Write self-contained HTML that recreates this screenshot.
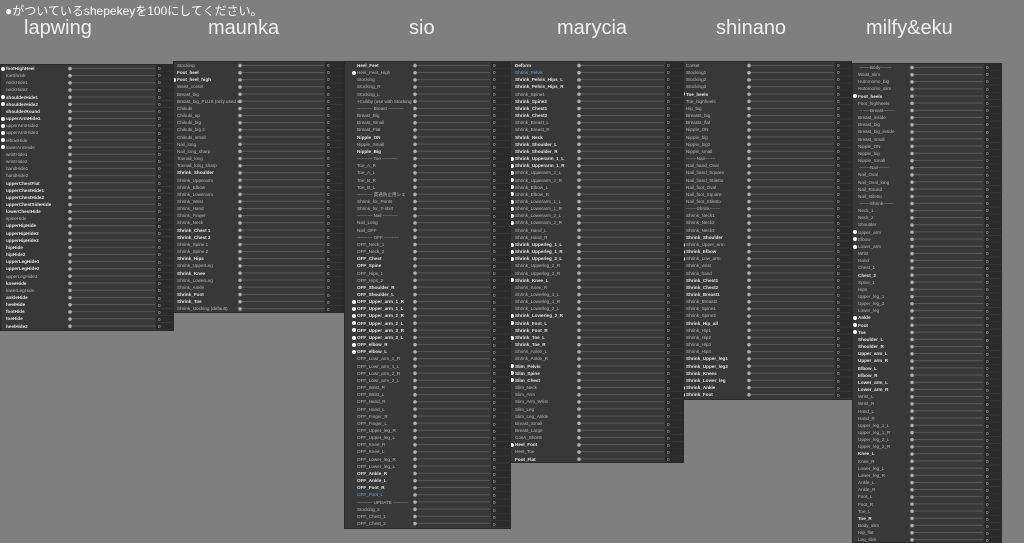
<!DOCTYPE html>
<html><head><meta charset="utf-8"><style>
*{margin:0;padding:0;box-sizing:border-box}
body{width:1024px;height:540px;background:#7f7f7f;overflow:hidden;position:relative;font-family:"Liberation Sans","Noto Sans CJK JP",sans-serif}
.t{position:absolute;left:5px;top:2px;font-size:12px;color:#fff;font-family:"Liberation Sans","Noto Sans CJK JP",sans-serif;white-space:nowrap}
.n{position:absolute;top:17px;font-size:20px;color:#f0f0f0;white-space:nowrap}
.p{position:absolute;background-color:#383838;border:1px solid #2a2a2a;overflow:hidden;
background-image:radial-gradient(circle at var(--k) 3.6px,#b0b0b0 1.5px,transparent 2.1px),
linear-gradient(to bottom,transparent 3px,#5a5a5a 3px,#5a5a5a 4px,transparent 4px);
background-size:100% 7.17px,calc(var(--e) - var(--k)) 7.17px;
background-position:0 0,var(--k) 0;background-repeat:repeat-y,repeat-y}
.l{position:absolute;left:var(--x);top:0;font-size:4.6px;line-height:7.17px;color:#b8b8b8;white-space:nowrap;width:calc(var(--k) - var(--x));overflow:visible}
.l div{height:7.17px}
.l b{color:#e6e6e6}
.v{position:absolute;left:var(--v);top:0;right:0;bottom:0;background:repeating-linear-gradient(#2b2b2b 0 6.3px,#363636 6.3px 7.17px);font-size:4.6px;line-height:7.17px;color:#bbb;padding-left:2px;word-spacing:40px}
.d{position:relative}
.d::before{content:"";position:absolute;left:-5px;top:1.6px;width:4px;height:4px;border-radius:50%;background:#fff}
</style></head><body>
<div class="t">●がついているshepekeyを100にしてください。</div>
<div class="n" style="left:24px">lapwing</div>
<div class="n" style="left:208px">maunka</div>
<div class="n" style="left:409px">sio</div>
<div class="n" style="left:557px">marycia</div>
<div class="n" style="left:716px">shinano</div>
<div class="n" style="left:866px">milfy&amp;eku</div>

<div class="p" style="left:0;top:64px;width:174px;height:267px;--k:69px;--e:154px;--v:155px;--x:5px">
<div class="l">
<div class="d"><b>footHighHeel</b></div><div>toeShrink</div><div>neckHide1</div><div>neckHide2</div><div class="d"><b>shoulderHide1</b></div><div class="d"><b>shoulderHide2</b></div><div><b>shoulderRound</b></div><div class="d"><b>upperArmHide1</b></div><div class="d">upperArmHide2</div><div class="d">upperArmHide3</div><div class="d">elbowHide</div><div class="d">lowerArmHide</div><div>wristHide1</div><div>wristHide2</div><div>handHide1</div><div>handHide2</div><div><b>upperChestFlat</b></div><div><b>upperChestHide1</b></div><div><b>upperChestHide2</b></div><div><b>upperChestSideHide</b></div><div><b>lowerChestHide</b></div><div>spineHide</div><div><b>upperHipHide</b></div><div><b>upperHipHide2</b></div><div><b>upperHipHide3</b></div><div><b>hipHide</b></div><div><b>hipHide2</b></div><div><b>upperLegHide1</b></div><div><b>upperLegHide2</b></div><div>upperLegHide3</div><div><b>kneeHide</b></div><div>lowerLegHide</div><div><b>ankleHide</b></div><div><b>heelHide</b></div><div><b>footHide</b></div><div><b>toeHide</b></div><div><b>heelHide2</b></div>
</div><div class="v">0 0 0 0 0 0 0 0 0 0 0 0 0 0 0 0 0 0 0 0 0 0 0 0 0 0 0 0 0 0 0 0 0 0 0 0 0</div></div>

<div class="p" style="left:173px;top:61px;width:171px;height:252px;--k:66px;--e:150px;--v:151px;--x:3px">
<div class="l">
<div>Stocking</div><div><b>Foot_heel</b></div><div class="d"><b>Foot_heel_high</b></div><div>Waist_corset</div><div>Breast_big</div><div>Breast_big_PLUS (only used wi</div><div>Chikubi</div><div>Chikubi_up</div><div>Chikubi_big</div><div>Chikubi_big 2</div><div>Chikubi_small</div><div>Nail_long</div><div>Nail_long_sharp</div><div>Toenail_long</div><div>Toenail_long_sharp</div><div><b>Shrink_Shoulder</b></div><div>Shrink_Upperarm</div><div>Shrink_Elbow</div><div>Shrink_Lowerarm</div><div>Shrink_Wrist</div><div>Shrink_Hand</div><div>Shrink_Finger</div><div>Shrink_Neck</div><div><b>Shrink_Chest 1</b></div><div><b>Shrink_Chest 2</b></div><div>Shrink_Spine 1</div><div>Shrink_Spine 2</div><div><b>Shrink_Hips</b></div><div>Shrink_UpperLeg</div><div><b>Shrink_Knee</b></div><div>Shrink_LowerLeg</div><div>Shrink_Ankle</div><div><b>Shrink_Foot</b></div><div><b>Shrink_Toe</b></div><div>Shrink_stocking (default)</div>
</div><div class="v">0 0 0 0 0 0 0 0 0 0 0 0 0 0 0 0 0 0 0 0 0 0 0 0 0 0 0 0 0 0 0 0 0 0 0</div></div>

<div class="p" style="left:344px;top:61px;width:167px;height:468px;--k:70px;--e:145px;--v:146px;--x:12px">
<div class="l">
<div><b>Heel_Feet</b></div><div class="d">Heel_Feet_High</div><div>Stocking</div><div>Stocking_R</div><div>Stocking_L</div><div>+Cubby (use with Stocking</div><div>---------- Breast ----------</div><div>Breast_Big</div><div>Breast_Small</div><div>Breast_Flat</div><div><b>Nipple_ON</b></div><div>Nipple_Small</div><div><b>Nipple_Big</b></div><div>---------- Toe ----------</div><div>Toe_A_R</div><div>Toe_A_L</div><div>Toe_B_R</div><div>Toe_B_L</div><div>---------- 貫通防止用シェ</div><div>Shrink_for_Pants</div><div>Shrink_for_T-shirt</div><div>---------- Nail ----------</div><div>Nail_Long</div><div>Nail_OFF</div><div>---------- OFF ----------</div><div>OFF_Neck_1</div><div>OFF_Neck_2</div><div><b>OFF_Chest</b></div><div><b>OFF_Spine</b></div><div>OFF_Hips_1</div><div>OFF_Hips_2</div><div><b>OFF_Shoulder_R</b></div><div><b>OFF_Shoulder_L</b></div><div class="d"><b>OFF_Upper_arm_1_R</b></div><div class="d"><b>OFF_Upper_arm_1_L</b></div><div class="d"><b>OFF_Upper_arm_2_R</b></div><div class="d"><b>OFF_Upper_arm_2_L</b></div><div class="d"><b>OFF_Upper_arm_3_R</b></div><div class="d"><b>OFF_Upper_arm_3_L</b></div><div class="d"><b>OFF_elbow_R</b></div><div class="d"><b>OFF_elbow_L</b></div><div>OFF_Lowr_arm_1_R</div><div>OFF_Lowr_arm_1_L</div><div>OFF_Lowr_arm_2_R</div><div>OFF_Lowr_arm_2_L</div><div>OFF_Wrist_R</div><div>OFF_Wrist_L</div><div>OFF_Hand_R</div><div>OFF_Hand_L</div><div>OFF_Finger_R</div><div>OFF_Finger_L</div><div>OFF_Upper_leg_R</div><div>OFF_Upper_leg_L</div><div>OFF_Knee_R</div><div>OFF_Knee_L</div><div>OFF_Lower_leg_R</div><div>OFF_Lower_leg_L</div><div><b>OFF_Ankle_R</b></div><div><b>OFF_Ankle_L</b></div><div><b>OFF_Foot_R</b></div><div style="color:#7aa6e8">OFF_Foot_L</div><div>---------- UPDATE ----------</div><div>Stocking_2</div><div>OFF_Chest_1</div><div>OFF_Chest_2</div>
</div><div class="v">0 0 0 0 0 0 0 0 0 0 0 0 0 0 0 0 0 0 0 0 0 0 0 0 0 0 0 0 0 0 0 0 0 0 0 0 0 0 0 0 0 0 0 0 0 0 0 0 0 0 0 0 0 0 0 0 0 0 0 0 0 0 0 0 0</div></div>

<div class="p" style="left:510px;top:61px;width:174px;height:402px;--k:68px;--e:153px;--v:154px;--x:4px">
<div class="l">
<div><b>Deform</b></div><div style="color:#7aa6e8">Shrink_Pelvis</div><div><b>Shrink_Pelvis_Hips_L</b></div><div><b>Shrink_Pelvis_Hips_R</b></div><div>Shrink_Spine1</div><div><b>Shrink_Spine2</b></div><div><b>Shrink_Chest1</b></div><div><b>Shrink_Chest2</b></div><div>Shrink_Breast_L</div><div>Shrink_Breast_R</div><div><b>Shrink_Neck</b></div><div><b>Shrink_Shoulder_L</b></div><div><b>Shrink_Shoulder_R</b></div><div class="d"><b>Shrink_Upperarm_1_L</b></div><div class="d"><b>Shrink_Upperarm_1_R</b></div><div class="d">Shrink_Upperarm_2_L</div><div class="d">Shrink_Upperarm_2_R</div><div class="d">Shrink_Elbow_L</div><div class="d">Shrink_Elbow_R</div><div class="d">Shrink_Lowerarm_1_L</div><div class="d">Shrink_Lowerarm_1_R</div><div class="d">Shrink_Lowerarm_2_L</div><div class="d">Shrink_Lowerarm_2_R</div><div>Shrink_Hand_L</div><div>Shrink_Hand_R</div><div class="d"><b>Shrink_Upperleg_1_L</b></div><div class="d"><b>Shrink_Upperleg_1_R</b></div><div class="d"><b>Shrink_Upperleg_2_L</b></div><div>Shrink_Upperleg_2_R</div><div>Shrink_Upperleg_3_R</div><div class="d"><b>Shrink_Knee_L</b></div><div>Shrink_Knee_R</div><div>Shrink_Lowerleg_1_L</div><div>Shrink_Lowerleg_1_R</div><div>Shrink_Lowerleg_2_L</div><div class="d"><b>Shrink_Lowerleg_2_R</b></div><div class="d"><b>Shrink_Foot_L</b></div><div><b>Shrink_Foot_R</b></div><div class="d"><b>Shrink_Toe_L</b></div><div><b>Shrink_Toe_R</b></div><div>Shrink_Ankle_L</div><div>Shrink_Ankle_R</div><div class="d"><b>Slim_Pelvis</b></div><div class="d"><b>Slim_Spine</b></div><div class="d"><b>Slim_Chest</b></div><div>Slim_Neck</div><div>Slim_Arm</div><div>Slim_Arm_Wrist</div><div>Slim_Leg</div><div>Slim_Leg_Ankle</div><div>Breast_Small</div><div>Breast_Large</div><div>CosA_Shorts</div><div class="d"><b>Heel_Foot</b></div><div>Heel_Toe</div><div><b>Foot_Flat</b></div><div><b>Pelvis_Flat</b></div>
</div><div class="v">0 0 0 0 0 0 0 0 0 0 0 0 0 0 0 0 0 0 0 0 0 0 0 0 0 0 0 0 0 0 0 0 0 0 0 0 0 0 0 0 0 0 0 0 0 0 0 0 0 0 0 0 0 0 0 0</div></div>

<div class="p" style="left:683px;top:61px;width:169px;height:339px;--k:65px;--e:150px;--v:151px;--x:2px">
<div class="l">
<div>Corset</div><div>Stocking1</div><div>Stocking2</div><div>Stocking3</div><div class="d"><b>Toe_heels</b></div><div>Toe_highheels</div><div>Hip_big</div><div>Breasts_big</div><div>Breasts_flat</div><div>Nipple_ON</div><div>Nipple_big</div><div>Nipple_big2</div><div>Nipple_small</div><div>-------Nail-------</div><div>Nail_hand_Oval</div><div>Nail_hand_Square</div><div>Nail_hand_Stiletto</div><div>Nail_foot_Oval</div><div>Nail_foot_Square</div><div>Nail_foot_Stiletto</div><div>-------Shrink-------</div><div>Shrink_Neck1</div><div>Shrink_Neck2</div><div>Shrink_Neck3</div><div><b>Shrink_Shoulder</b></div><div class="d">Shrink_Upper_arm</div><div class="d"><b>Shrink_Elbow</b></div><div class="d">Shrink_Low_arm</div><div>Shrink_wrist</div><div>Shrink_hand</div><div><b>Shrink_Chest1</b></div><div><b>Shrink_Chest2</b></div><div><b>Shrink_Breast1</b></div><div>Shrink_Breast2</div><div>Shrink_Spine1</div><div>Shrink_Spine2</div><div><b>Shrink_Hip_all</b></div><div>Shrink_Hip1</div><div>Shrink_Hip2</div><div>Shrink_Hip3</div><div>Shrink_Hip4</div><div><b>Shrink_Upper_leg1</b></div><div><b>Shrink_Upper_leg2</b></div><div><b>Shrink_Knees</b></div><div><b>Shrink_Lower_leg</b></div><div class="d"><b>Shrink_Ankle</b></div><div class="d"><b>Shrink_Foot</b></div>
</div><div class="v">0 0 0 0 0 0 0 0 0 0 0 0 0 0 0 0 0 0 0 0 0 0 0 0 0 0 0 0 0 0 0 0 0 0 0 0 0 0 0 0 0 0 0 0 0 0 0</div></div>

<div class="p" style="left:852px;top:63px;width:150px;height:480px;--k:59px;--e:130px;--v:131px;--x:5px">
<div class="l">
<div>&nbsp;-------Body-------</div><div>Waist_slim</div><div>Hutomomo_big</div><div>Hutomomo_slim</div><div class="d"><b>Foot_heels</b></div><div>Foot_highheels</div><div>&nbsp;-------Breast-------</div><div>Breast_inside</div><div>Breast_big</div><div>Breast_big_inside</div><div>Breast_small</div><div>Nipple_ON</div><div>Nipple_big</div><div>Nipple_Small</div><div>&nbsp;-------Nail-------</div><div>Nail_Oval</div><div>Nail_Oval_long</div><div>Nail_Round</div><div>Nail_stiletto</div><div>&nbsp;-------Shrink-------</div><div>Neck_1</div><div>Neck_2</div><div>Shoulder</div><div class="d">Upper_arm</div><div class="d">Elbow</div><div class="d">Lower_arm</div><div>Wrist</div><div>Hand</div><div>Chest_1</div><div><b>Chest_2</b></div><div>Spine_1</div><div>Hips</div><div>Upper_leg_1</div><div>Upper_leg_2</div><div>Lower_leg</div><div class="d"><b>Ankle</b></div><div class="d"><b>Foot</b></div><div class="d"><b>Toe</b></div><div><b>Shoulder_L</b></div><div><b>Shoulder_R</b></div><div><b>Upper_arm_L</b></div><div><b>Upper_arm_R</b></div><div><b>Elbow_L</b></div><div><b>Elbow_R</b></div><div><b>Lower_arm_L</b></div><div><b>Lower_arm_R</b></div><div>Wrist_L</div><div>Wrist_R</div><div>Hand_L</div><div>Hand_R</div><div>Upper_leg_1_L</div><div>Upper_leg_1_R</div><div>Upper_leg_2_L</div><div>Upper_leg_2_R</div><div><b>Knee_L</b></div><div>Knee_R</div><div>Lower_leg_L</div><div>Lower_leg_R</div><div>Ankle_L</div><div>Ankle_R</div><div>Foot_L</div><div>Foot_R</div><div>Toe_L</div><div><b>Toe_R</b></div><div>Body_slim</div><div>Hip_flat</div><div>Leg_slim</div>
</div><div class="v">0 0 0 0 0 0 0 0 0 0 0 0 0 0 0 0 0 0 0 0 0 0 0 0 0 0 0 0 0 0 0 0 0 0 0 0 0 0 0 0 0 0 0 0 0 0 0 0 0 0 0 0 0 0 0 0 0 0 0 0 0 0 0 0 0 0 0 0</div></div>
</body></html>
